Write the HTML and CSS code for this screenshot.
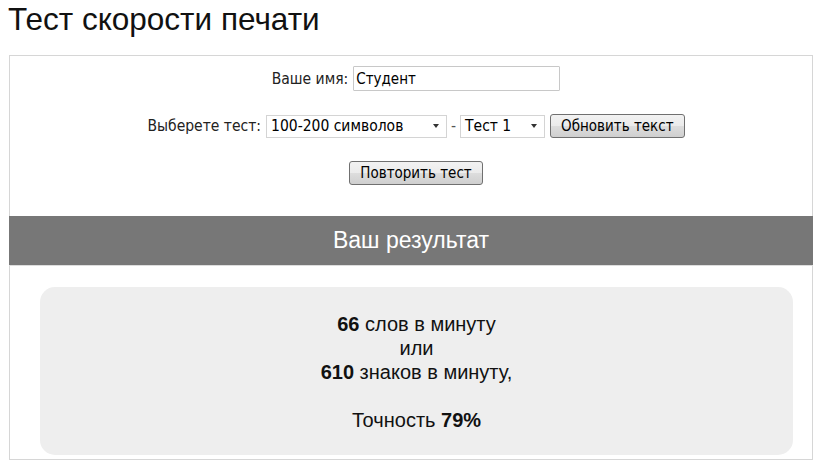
FILE: index.html
```html
<!DOCTYPE html>
<html lang="ru">
<head>
<meta charset="utf-8">
<title>Тест скорости печати</title>
<link rel="stylesheet" href="styles.css">
</head>
<body>
<h1 class="title">Тест скорости печати</h1>
<div class="panel">
  <div class="controls">
    <div class="row">
      <label class="lbl" for="name">Ваше имя:</label>
      <input id="name" class="name-input" type="text" value="Студент">
    </div>
    <div class="row">
      <span class="lbl">Выберете тест:</span>
      <span class="select sel-wide"><span>100-200 символов</span><i class="arrow"></i></span>
      <span class="dash">-</span>
      <span class="select sel-narrow"><span>Тест 1</span><i class="arrow"></i></span>
      <button class="btn">Обновить текст</button>
    </div>
    <div class="row">
      <button class="btn">Повторить тест</button>
    </div>
  </div>
  <div class="result-bar">Ваш результат</div>
  <div class="result-wrap">
    <div class="result-box">
      <p><b>66</b> слов в минуту</p>
      <p>или</p>
      <p><b>610</b> знаков в минуту,</p>
      <p class="gap"><br></p>
      <p>Точность <b>79%</b></p>
    </div>
  </div>
</div>
</body>
</html>
```
FILE: styles.css
```css
html, body { margin: 0; padding: 0; background: #fff; }
body { padding: 0 8px; font-family: "Liberation Sans", Arial, sans-serif; color: #000; }
.title {
  margin: 0;
  padding-top: 1px;
  font-size: 31.5px;
  font-weight: normal;
  line-height: 36px;
  height: 54px;
  color: #111;
}
.panel {
  margin-left: 1px;
  width: 802px;
  border: 1px solid #d6d6d6;
}
.controls { padding: 10px 0 31px 10px; }
.row {
  display: flex;
  justify-content: center;
  align-items: center;
  font-family: Tahoma, "DejaVu Sans Condensed", "DejaVu Sans", sans-serif;
  font-size: 15.5px;
  font-stretch: condensed;
}
.row + .row { margin-top: 23px; }
.lbl { margin-right: 5px; color: #222; }
.name-input {
  box-sizing: border-box;
  width: 207px;
  height: 25px;
  border: 1px solid #c8c8c8;
  border-radius: 1px;
  padding: 0 2px;
  font: inherit;
  font-size: 15px;
  color: #000;
  outline: none;
}
.select {
  box-sizing: border-box;
  display: inline-flex;
  align-items: center;
  justify-content: space-between;
  height: 23px;
  padding: 0 4px 0 4px;
  border: 1px solid #d4d4d4;
  font-size: 15.5px;
  background: #fff;
}
.sel-wide { width: 181px; }
.sel-narrow { width: 85px; }
.arrow {
  width: 0; height: 0;
  border-left: 3px solid transparent;
  border-right: 3px solid transparent;
  border-top: 4px solid #333;
  margin-right: 3px;
}
.dash { margin: 0 4px; color: #555; }
.btn {
  box-sizing: border-box;
  height: 24px;
  padding: 0 10px;
  margin-left: 5px;
  border: 1px solid #707070;
  border-radius: 3px;
  background: linear-gradient(#f2f2f2 0%, #ebebeb 50%, #dddddd 51%, #cfcfcf 100%);
  font: inherit;
  font-size: 15px;
  color: #000;
}
.row:last-child .btn { margin-left: 0; }
.result-bar {
  margin: 0 -1px;
  height: 49px;
  line-height: 49px;
  background: #777;
  color: #fff;
  text-align: center;
  font-family: "Liberation Sans", Arial, sans-serif;
  font-size: 23px;
  border-bottom: 1px solid #ddd;
}
.result-wrap { padding: 21px 19px 4px 30px; }
.result-box {
  background: #eeeeee;
  border-radius: 15px;
  padding: 25px 0 23px;
  text-align: center;
  font-family: "Liberation Sans", Arial, sans-serif;
  font-size: 20px;
  line-height: 24px;
  color: #111;
}
.result-box p { margin: 0; }
```
